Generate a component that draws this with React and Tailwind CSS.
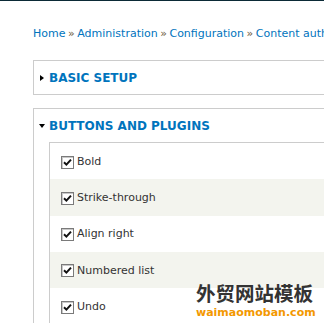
const CRUMBS = ['Home', 'Administration', 'Configuration', 'Content authoring'];

const PLUGINS = ['Bold', 'Strike-through', 'Align right', 'Numbered list', 'Undo'];

function Checkbox() {
  return (
    <span className="flex h-[13px] w-[13px] flex-shrink-0 items-center justify-center border border-[#7a7a7a] bg-white shadow-[inset_1px_1px_0_#c8c8c8]">
      <svg width="9" height="9" viewBox="0 0 9 9">
        <path d="M1 4.2 L3.4 6.6 L8 1.6" fill="none" stroke="#111" strokeWidth="2" />
      </svg>
    </span>
  );
}

function Legend({ open, children }) {
  return (
    <div className="flex items-center pl-[5px] text-[12px] font-bold uppercase leading-none text-[#0074bd]">
      {open ? (
        <span className="mr-[4px] h-0 w-0 border-x-[3px] border-t-[4px] border-x-transparent border-t-black" />
      ) : (
        <span className="ml-[1px] mr-[5px] h-0 w-0 border-y-[3.5px] border-l-[4px] border-y-transparent border-l-black" />
      )}
      <span>{children}</span>
    </div>
  );
}

export default function App() {
  return (
    <div className="relative h-[323px] w-[324px] overflow-hidden bg-white font-['DejaVu_Sans',sans-serif]">
      <div className="h-px bg-[#0b2a36]" />
      <div className="pl-[33px]">
        <div className="mt-[25px] flex h-4 items-center whitespace-nowrap text-[11px] leading-4 text-[#0074bd]">
          {CRUMBS.map((c, i) => (
            <span key={c} className="flex items-center">
              {i > 0 && <span className="px-[2.5px] text-[#6e5a3e]">»</span>}
              {c}
            </span>
          ))}
        </div>

        <div className="mt-[18px] flex h-[35px] w-[400px] items-center border border-[#ccc]">
          <Legend>Basic setup</Legend>
        </div>

        <div className="mt-[13px] w-[400px] border border-[#ccc] pb-4">
          <div className="flex h-[33px] items-center">
            <Legend open>Buttons and plugins</Legend>
          </div>
          <div className="ml-[15px] border border-[#ccc]">
            {PLUGINS.map((p, i) => (
              <div
                key={p}
                className={`flex h-[36.25px] items-center gap-[3px] pl-[11px] pt-[2px] text-[11px] text-[#333] ${
                  i % 2 ? 'bg-[#f3f4ee]' : 'bg-white'
                }`}
              >
                <Checkbox />
                <span>{p}</span>
              </div>
            ))}
          </div>
        </div>
      </div>

      <div className="absolute left-[196px] top-[281px] flex flex-col items-start">
        <span className="text-[19.5px] font-bold leading-[24px] text-[#333] font-['Noto_Sans_CJK_SC',sans-serif]">
          外贸网站模板
        </span>
        <span className="mt-[1px] text-[11px] font-bold leading-[13px] text-[#f39800]">waimaomoban.com</span>
      </div>
    </div>
  );
}
